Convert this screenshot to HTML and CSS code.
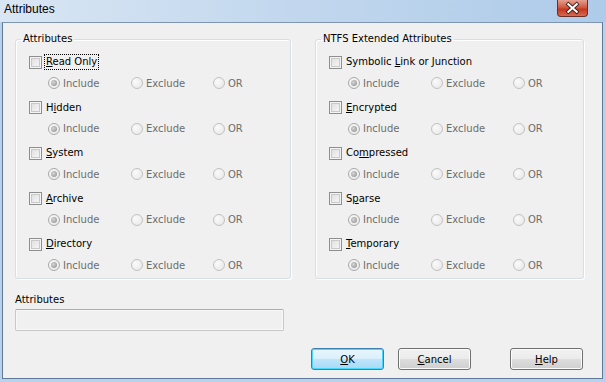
FILE: index.html
```html
<!DOCTYPE html>
<html lang="en">
<head>
  <meta charset="UTF-8" />
  <title>Attributes</title>
  <link rel="stylesheet" href="styles.css">
</head>
<body>
  <div class="window">
    <div class="titlebar">
      <span class="title">Attributes</span>
      <div class="close">
        <svg width="31" height="18" viewBox="0 0 31 18">
          <path d="M11 5 L20 13 M20 5 L11 13" stroke="#3b1f1f" stroke-width="4" stroke-linecap="square"/>
          <path d="M11 5 L20 13 M20 5 L11 13" stroke="#ffffff" stroke-width="2.2" stroke-linecap="square"/>
        </svg>
      </div>
    </div>

    <div class="client">
      <div class="groups">
        <!-- Standard attributes -->
        <fieldset class="group group-left">
          <legend>Attributes</legend>
          <div class="attr">
            <label class="check"><span class="box"></span><span class="text focus"><u>R</u>ead Only</span></label>
            <div class="radios">
              <span class="radio on"><span class="dot"></span>Include</span>
              <span class="radio"><span class="dot"></span>Exclude</span>
              <span class="radio"><span class="dot"></span>OR</span>
            </div>
          </div>
          <div class="attr">
            <label class="check"><span class="box"></span><span class="text">H<u>i</u>dden</span></label>
            <div class="radios">
              <span class="radio on"><span class="dot"></span>Include</span>
              <span class="radio"><span class="dot"></span>Exclude</span>
              <span class="radio"><span class="dot"></span>OR</span>
            </div>
          </div>
          <div class="attr">
            <label class="check"><span class="box"></span><span class="text"><u>S</u>ystem</span></label>
            <div class="radios">
              <span class="radio on"><span class="dot"></span>Include</span>
              <span class="radio"><span class="dot"></span>Exclude</span>
              <span class="radio"><span class="dot"></span>OR</span>
            </div>
          </div>
          <div class="attr">
            <label class="check"><span class="box"></span><span class="text"><u>A</u>rchive</span></label>
            <div class="radios">
              <span class="radio on"><span class="dot"></span>Include</span>
              <span class="radio"><span class="dot"></span>Exclude</span>
              <span class="radio"><span class="dot"></span>OR</span>
            </div>
          </div>
          <div class="attr">
            <label class="check"><span class="box"></span><span class="text"><u>D</u>irectory</span></label>
            <div class="radios">
              <span class="radio on"><span class="dot"></span>Include</span>
              <span class="radio"><span class="dot"></span>Exclude</span>
              <span class="radio"><span class="dot"></span>OR</span>
            </div>
          </div>
        </fieldset>

        <!-- NTFS attributes -->
        <fieldset class="group group-right">
          <legend>NTFS Extended Attributes</legend>
          <div class="attr">
            <label class="check"><span class="box"></span><span class="text">Symbolic <u>L</u>ink or Junction</span></label>
            <div class="radios">
              <span class="radio on"><span class="dot"></span>Include</span>
              <span class="radio"><span class="dot"></span>Exclude</span>
              <span class="radio"><span class="dot"></span>OR</span>
            </div>
          </div>
          <div class="attr">
            <label class="check"><span class="box"></span><span class="text"><u>E</u>ncrypted</span></label>
            <div class="radios">
              <span class="radio on"><span class="dot"></span>Include</span>
              <span class="radio"><span class="dot"></span>Exclude</span>
              <span class="radio"><span class="dot"></span>OR</span>
            </div>
          </div>
          <div class="attr">
            <label class="check"><span class="box"></span><span class="text">Co<u>m</u>pressed</span></label>
            <div class="radios">
              <span class="radio on"><span class="dot"></span>Include</span>
              <span class="radio"><span class="dot"></span>Exclude</span>
              <span class="radio"><span class="dot"></span>OR</span>
            </div>
          </div>
          <div class="attr">
            <label class="check"><span class="box"></span><span class="text">S<u>p</u>arse</span></label>
            <div class="radios">
              <span class="radio on"><span class="dot"></span>Include</span>
              <span class="radio"><span class="dot"></span>Exclude</span>
              <span class="radio"><span class="dot"></span>OR</span>
            </div>
          </div>
          <div class="attr">
            <label class="check"><span class="box"></span><span class="text"><u>T</u>emporary</span></label>
            <div class="radios">
              <span class="radio on"><span class="dot"></span>Include</span>
              <span class="radio"><span class="dot"></span>Exclude</span>
              <span class="radio"><span class="dot"></span>OR</span>
            </div>
          </div>
        </fieldset>
      </div>

      <div class="summary">
        <div class="summary-label">Attributes</div>
        <div class="textbox"></div>
      </div>

      <div class="buttons">
        <button type="button" class="btn default"><u>O</u>K</button>
        <button type="button" class="btn"><u>C</u>ancel</button>
        <button type="button" class="btn help"><u>H</u>elp</button>
      </div>
    </div>
  </div>
</body>
</html>
```

FILE: styles.css
```css
* {
  box-sizing: border-box;
}

body {
  margin: 0;
  width: 606px;
  height: 382px;
  overflow: hidden;
  background: #b9d1ea;
  font-family: 'DejaVu Sans', sans-serif;
  font-size: 10px;
  color: #000;
}

.window {
  height: 382px;
  display: flex;
  flex-direction: column;
}

.titlebar {
  height: 22px;
  display: flex;
  align-items: flex-start;
  justify-content: space-between;
  background: linear-gradient(to right, #d9e6f4, #c3d8ee 45%, #aecbe9);
  padding-left: 4px;
  padding-right: 18px;
}

.title {
  font-family: 'Liberation Sans', sans-serif;
  font-size: 12px;
  line-height: 18px;
  color: #000;
}

.close {
  width: 31px;
  height: 18px;
  margin-top: -1px;
  border: 1px solid #6b2f27;
  border-top: none;
  border-radius: 0 0 4px 4px;
  background: linear-gradient(to bottom, #e9a99c, #d0583f 50%, #c3371e 60%, #d86a4e);
  display: flex;
  align-items: center;
  justify-content: center;
}

.close svg {
  display: block;
}

.client {
  flex: 1;
  margin: 0 3px 3px 2px;
  border: 1px solid #5f7896;
  border-top-color: #7f96b2;
  background: #f0f0f0;
  display: flex;
  flex-direction: column;
}

.groups {
  display: flex;
  gap: 24px;
  padding: 9px 0 0 12px;
}

.group {
  margin: 0;
  padding: 0;
  height: 247px;
  border: 1px solid #d5dfe5;
  border-radius: 3px;
  box-shadow: inset 1px 1px 0 #fff, 1px 1px 0 #fff;
  display: flex;
  flex-direction: column;
  gap: 8.5px;
}

.group-left {
  width: 276px;
}

.group-right {
  width: 269px;
}

legend {
  margin-left: 5px;
  padding: 0 2px;
  line-height: 14px;
}

.attr {
  padding: 8px 0 0 13px;
}

.attr + .attr {
  padding-top: 0;
}

.check {
  display: flex;
  align-items: center;
  height: 16px;
}

.box {
  width: 13px;
  height: 13px;
  border: 1px solid #8e8f8f;
  background: linear-gradient(135deg, #dcdcdc, #f4f4f4 80%);
  box-shadow: inset 0 0 0 1px #f4f4f4, inset 0 0 0 2px #c9c9c9;
  margin-right: 2px;
}

.text {
  padding: 0 1px;
  line-height: 14px;
  border: 1px solid transparent;
}

.text.focus {
  border: 1px dotted #000;
}

u {
  text-decoration: underline;
  text-underline-offset: 1px;
}

.radios {
  display: grid;
  grid-template-columns: 83px 82px auto;
  height: 16px;
  margin-top: 5px;
  padding-left: 19px;
  color: #6d6d6d;
}

.radio {
  display: flex;
  align-items: center;
  gap: 3px;
}

.dot {
  width: 12px;
  height: 12px;
  border-radius: 50%;
  border: 1px solid #c2c2c2;
  background: radial-gradient(circle at 35% 35%, #fafafa, #e6e6e6);
  position: relative;
}

.radio.on .dot {
  border-color: #a9a9a9;
}

.radio.on .dot::after {
  content: "";
  position: absolute;
  left: 2px;
  top: 2px;
  width: 6px;
  height: 6px;
  border-radius: 50%;
  background: radial-gradient(circle at 40% 40%, #d6d6d6, #8a8a8a);
}

.summary {
  padding: 14px 0 0 12px;
}

.summary-label {
  line-height: 14px;
}

.textbox {
  margin-top: 2px;
  width: 269px;
  height: 22px;
  border: 1px solid #c7c7c7;
  border-top-color: #acacac;
  border-radius: 2px;
  background: #f0f0f0;
  box-shadow: inset 0 0 0 1px #f8f8f8;
}

.buttons {
  display: flex;
  justify-content: flex-end;
  padding: 17px 19px 0 0;
}

.btn {
  width: 73px;
  height: 22px;
  margin-left: 14px;
  padding: 0;
  font-family: 'DejaVu Sans', sans-serif;
  font-size: 10px;
  color: #000;
  border: 1px solid #707070;
  border-radius: 3px;
  background: linear-gradient(to bottom, #f2f2f2, #ebebeb 50%, #dddddd 51%, #cfcfcf);
  box-shadow: inset 0 0 0 1px #fbfbfb;
}

.btn.default {
  border-color: #3c7fb1;
  background: linear-gradient(to bottom, #eaf6fd, #d9f0fc 50%, #bee6fd 51%, #a7d9f5);
  box-shadow: inset 0 0 0 1px #48d8fb;
}

.btn.help {
  margin-left: 39px;
}
```
